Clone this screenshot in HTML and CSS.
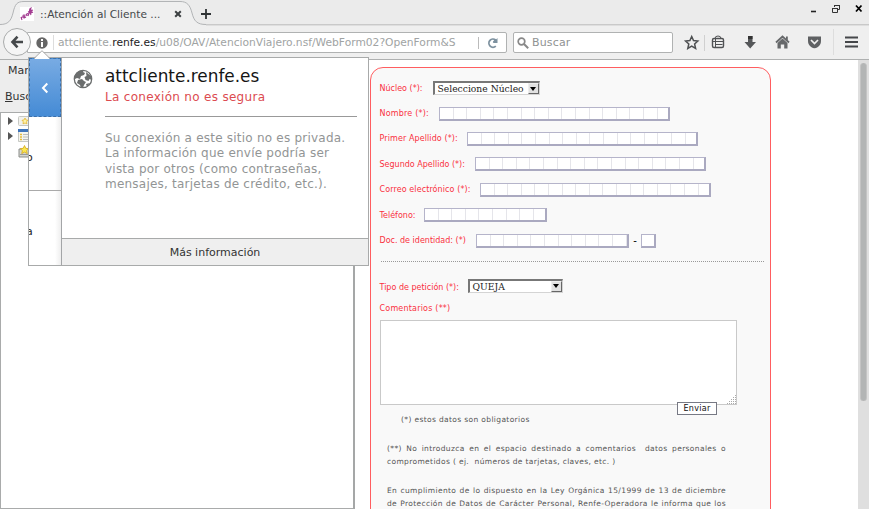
FILE: index.html
```html
<!DOCTYPE html>
<html lang="es">
<head>
<meta charset="utf-8">
<title>::Atención al Cliente</title>
<link rel="stylesheet" href="styles.css">
</head>
<body>
<div class="window">
  <header class="tabs">
    <svg class="tab-shape" width="206" height="26" viewBox="0 0 206 26"><path d="M0 24.500C8 24.500 11 21 13 13C15 4 17 1.500 24 1.500H180C187 1.500 190 5 192 13C194 21 197 24.500 206 24.500V26H0Z" fill="#efefef"/><path d="M0 24.500C8 24.500 11 21 13 13C15 4 17 1.500 24 1.500H180C187 1.500 190 5 192 13C194 21 197 24.500 206 24.500" fill="none" stroke="#b2b4b6"/></svg>
    <div class="tab">
      <svg class="favicon" width="14" height="14" viewBox="0 0 14 14"><path fill="#fff" d="M0 0h14v14H0z"/><path d="M1 10l1 3M1.500 10.500l2-1M4 10q2-2 0-2t0 3l2-1M6 7l1 2M6.500 7q1.500-1 2 1M8 9L11 1q-3 1 0 7M8 5l5-2M10 5q3-1 1-2t0 3l2-1" fill="none" stroke="#a33b91" stroke-width="1.100"/></svg>
      <span class="tab-title">::Atención al Cliente ...</span>
      <svg class="tab-x" width="8" height="8" viewBox="0 0 8 8"><path d="M1.200 1.200l5.600 5.600M6.800 1.200L1.200 6.800" stroke="#3c4042" stroke-width="2"/></svg>
      <svg class="plus" width="12" height="12" viewBox="0 0 12 12"><path d="M6 1v10M1 6h10" stroke="#303436" stroke-width="1.800"/></svg>
    </div>
    <svg class="controls" width="54" height="12" viewBox="0 0 54 12"><path d="M1 7.500h5" stroke="#222" stroke-width="1.600"/><path d="M24.500 3V1.500h5v4H28M22.500 4.500h5v4h-5zM24 1.500h6M22 4.500h6" stroke="#333" fill="none"/><path d="M46 1.500l5.500 6M51.500 1.500l-5.500 6" stroke="#000" stroke-width="1.800"/></svg>
  </header>
  <nav class="toolbar">
    <div class="back"><svg width="14" height="14" viewBox="0 0 14 14"><path d="M7.500 1.700L2.500 7l5 5.300M3 7h10" stroke="#45484a" stroke-width="2.600" fill="none"/></svg></div>
    <div class="urlbar">
      <svg class="info" width="12" height="12" viewBox="0 0 12 12"><circle cx="6" cy="6" r="5.700" fill="#666"/><path d="M6 2v2M6 5v5" stroke="#fff" stroke-width="2"/></svg>
      <span class="url">attcliente.<b>renfe.es</b>/u08/OAV/AtencionViajero.nsf/WebForm02?OpenForm&amp;S</span>
      <svg class="reload" width="12" height="12" viewBox="0 0 12 12"><path d="M8.800 9.200A4.100 4.100 0 1 1 8.600 3L6.500 5.200" fill="none" stroke="#7d919f" stroke-width="1.800"/><path d="M10.500 1v5H5.700z" fill="#7d919f"/></svg>
    </div>
    <div class="search"><svg width="12" height="12" viewBox="0 0 12 12"><circle cx="4.500" cy="4.500" r="3.300" fill="none" stroke="#888" stroke-width="1.700"/><path d="M7 7l4.200 4.200" stroke="#888" stroke-width="2"/></svg><span>Buscar</span></div>
    <div class="tools">
      <svg width="189" height="32" viewBox="0 0 189 32"><path d="M18.700 10.500l1.800 4.100 4.300.4-3.200 3 1 4.400-3.900-2.300-3.900 2.300 1-4.400-3.200-3 4.300-.4z" fill="none" stroke="#4e5052" stroke-width="1.500"/><path d="M31.500 9v16" stroke="#d0d0d0"/><rect x="39.500" y="12.500" width="11" height="9" rx="1.500" fill="none" stroke="#505254" stroke-width="1.400"/><path d="M42 12.500q0-2.500 3-2.500t3 2.500M40 15.500h10M42.500 18.500h7M42.500 13v8" fill="none" stroke="#505254"/><path d="M75 10h4.500v6H83l-5.800 6.500L71.500 16H75z" fill="#555759"/><path d="M75 10h4.500v3H75z" fill="#333"/><path d="M103 16.500l6.500-6 6.500 6" fill="none" stroke="#66686a" stroke-width="1.800"/><path d="M104.500 17l5-4.600 5 4.600v5.500h-3.300v-4h-3.400v4h-3.300zM113 10.500h1.800v4l-1.800-1.600z" fill="#66686a"/><path d="M135 10.500h13v4.500q0 4-3.500 6.300-3 2-6 0Q135 19 135 15z" fill="#5f6163"/><path d="M138 14l3.500 3.500L145 14" fill="none" stroke="#eee" stroke-width="1.700"/><path d="M160.500 3v26" stroke="#ddd"/><path d="M172 11.500h13M172 16h13M172 20.500h13" stroke="#45474a" stroke-width="2.200"/></svg>
    </div>
  </nav>
  <div class="main">
    <aside class="sidebar">
      <div class="side-title">Marcadores</div>
      <div class="side-search"><u>B</u>uscar:</div>
      <div class="tree">
        <div class="item"><i></i><svg width="14" height="12" viewBox="0 0 14 12"><rect x=".5" y="1.500" width="13" height="9" rx="1" fill="#f1f1ed" stroke="#c6c8c4"/><path d="M7 3l1 2 2 .3-1.500 1.500.4 2L7 8l-2 .8.300-2L4 5.300 6 5z" fill="#fff3a8" stroke="#e3b62f" stroke-width=".8"/></svg></div>
        <div class="item"><i></i><svg width="14" height="13" viewBox="0 0 14 13"><path d="M.5.500h13v12H.5z" fill="#f5f5ed" stroke="#c6c8c4"/><path d="M0 0h12v3H0z" fill="#3f74ba"/><path d="M2 5.500h2M2 8h2M2 10.500h2" stroke="#e8bc3a" stroke-width="1.500"/><path d="M5 5.500h6M5 8h6M5 10.500h6" stroke="#bbb"/></svg></div>
        <div class="item leaf"><svg width="14" height="13" viewBox="0 0 14 13"><path d="M1 4h12v8H1z" fill="#d4d6d2" stroke="#8b8d89"/><path d="M2 9.500h11" stroke="#999"/><path d="M6.500.500l1.300 2.800 3 .3-2.200 2 .7 3-2.800-1.500L3.700 8.600l.7-3-2.200-2 3-.3z" fill="#fce94f" stroke="#d4a81c" stroke-width=".8"/></svg></div>
      </div>
    </aside>
    <main class="page">
      <form class="panel">
        <div class="row core"><label>Núcleo (*):</label><div class="select"><span>Seleccione Núcleo</span><em></em></div></div>
        <div class="row name"><label>Nombre (*):</label><div class="cells"></div></div>
        <div class="row first"><label>Primer Apellido (*):</label><div class="cells"></div></div>
        <div class="row second"><label>Segundo Apellido (*):</label><div class="cells"></div></div>
        <div class="row mail"><label>Correo electrónico (*):</label><div class="cells"></div></div>
        <div class="row phone"><label>Teléfono:</label><div class="cells"></div></div>
        <div class="row doc"><label>Doc. de identidad: (*)</label><div class="cells"></div><span class="dash">-</span><div class="cells one"></div></div>
        <div class="rule"></div>
        <div class="row kind"><label>Tipo de petición (*):</label><div class="select"><span>QUEJA</span><em></em></div></div>
        <div class="comments">Comentarios (**)</div>
        <div class="textarea"><svg width="9" height="9" viewBox="0 0 9 9"><path d="M0 8.500h9M2 6.500h7M4 4.500h5M6 2.500h3M8 .5h1" stroke="#aaa" stroke-dasharray="1 1"/></svg></div>
        <div class="send">Enviar</div>
        <div class="mandatory">(*) estos datos son obligatorios</div>
        <div class="notes">
          <p class="full">(**) No introduzca en el espacio destinado a comentarios &nbsp;datos personales o</p>
          <p>comprometidos ( ej. &nbsp;números de tarjetas, claves, etc. )</p>
          <p class="full legal">En cumplimiento de lo dispuesto en la Ley Orgánica 15/1999 de 13 de diciembre</p>
          <p class="full">de Protección de Datos de Carácter Personal, Renfe-Operadora le informa que los</p>
        </div>
      </form>
    </main>
    <div class="scrollbar"><div class="thumb"></div></div>
  </div>
  <section class="popup">
    <svg class="arrow" width="16" height="9" viewBox="0 0 16 9"><path d="M0 9L8 .7 16 9z" fill="#fff"/><path d="M0 8.500L8 .7l8 7.800" fill="none" stroke="#aaa"/></svg>
    <div class="strip">
      <div class="chevron"><svg width="8" height="12" viewBox="0 0 8 12"><path d="M6.300 1.500L2 6l4.300 4.500" fill="none" stroke="#fff" stroke-width="2"/></svg></div>
      <div class="under"><span>o</span></div>
      <div class="under last"><span>a</span></div>
    </div>
    <div class="card">
      <div class="body">
        <svg class="globe" width="20" height="20" viewBox="0 0 20 20"><circle cx="10" cy="10" r="8.700" fill="#fff" stroke="#6b6e6e" stroke-width="1.300"/><path d="M2 6Q5 1 11 1l-1 2 2 1-1 2-3 1-1 3-3-1-2 1zM13 3l5 4 .5 4-2-1-1 2-3-1-1-3 2-1zM5 11l4-1 2 2 2 1-2 3-1 3H8l-1-3-3-2zM13 15l4-1-3 4z" fill="#6b6e6e"/></svg>
        <div class="info-text">
          <h1>attcliente.renfe.es</h1>
          <h2>La conexión no es segura</h2>
          <p>Su conexión a este sitio no es privada.<br>La información que envíe podría ser<br>vista por otros (como contraseñas,<br>mensajes, tarjetas de crédito, etc.).</p>
        </div>
      </div>
      <div class="more">Más información</div>
    </div>
  </section>
</div>
</body>
</html>
```
FILE: styles.css
```css
* { box-sizing: border-box; }
body { margin: 0; font-family: "DejaVu Sans", sans-serif; overflow: hidden; }
svg { display: block; flex: none; }
.window { position: relative; width: 869px; height: 509px; display: flex; flex-direction: column; overflow: hidden; background: #ededed; }
.tabs { position: relative; height: 26px; flex: none; display: flex; justify-content: space-between; background: linear-gradient(#ebebeb 24px, #c9c9c9 24px, #c9c9c9 25px, #dedede 25px); }
.tab-shape { position: absolute; left: 0; top: 0; }
.tab { position: relative; display: flex; align-items: center; height: 27px; padding-left: 20px; }
.tab-title { width: 140px; flex: none; padding-left: 6px; font-size: 10.600px; color: #45494b; white-space: nowrap; }
.plus { margin-left: 18px; }
.controls { margin: 4px 5px 0 0; }
.toolbar { height: 34px; flex: none; display: flex; align-items: flex-start; padding: 0 0 0 3px; background: #efefef; border-bottom: 1px solid #aeb0b0; }
.back { width: 28px; height: 28px; margin-top: 2px; border: 1px solid #a9abab; border-radius: 50%; background: #f5f5f5; display: flex; align-items: center; justify-content: center; position: relative; z-index: 1; }
.urlbar { width: 480px; height: 21px; margin: 6px 0 0 -4px; padding-left: 8px; background: #fff; border: 1px solid #b0b2b2; border-radius: 0 2px 2px 0; display: flex; align-items: center; }
.url { width: 405px; flex: none; height: 15px; margin-left: 5px; padding-left: 4px; border-left: 1px solid #ddd; font-size: 10.700px; line-height: 15px; color: #a0a3a3; white-space: nowrap; overflow: hidden; }
.url b { font-weight: 400; color: #222; }
.reload { box-sizing: content-box; margin-left: 20px; padding-left: 8px; border-left: 1px solid #bbb; }
.search { width: 160px; height: 21px; margin: 6px 0 0 6px; padding-left: 3px; border: 1px solid #b0b2b2; border-radius: 2px; background: #fff; display: flex; align-items: center; gap: 3px; font-size: 11px; letter-spacing: .15px; color: #8f9292; }
.tools { width: 189px; }
.main { display: flex; flex: 1; min-height: 0; }
.sidebar { width: 355px; border-right: 2px solid #a5a7a7; background: #ededed; display: flex; flex-direction: column; font-size: 11px; color: #333; }
.side-title { height: 22px; padding: 4px 0 0 8px; line-height: 14px; }
.side-search { height: 30px; padding: 8px 0 0 5px; line-height: 14px; }
.tree { flex: 1; background: #fff; border: 1px solid #a9abab; border-right: 0; }
.item { height: 15px; padding-left: 7px; display: flex; align-items: center; gap: 5px; }
.item i { border: 4px solid transparent; border-left: 5px solid #555; border-right: 0; }
.leaf { padding-left: 17px; height: 17px; }
.page { flex: 1; min-width: 0; background: #fff; padding: 7px 0 0 15px; }
.panel { width: 401px; height: 470px; border: 1px solid #ff5d60; border-radius: 13px; background: #f9f9f9; padding: 7.500px 0 0 8.500px; display: flex; flex-direction: column; }
.row { height: 25.4px; flex: none; display: flex; align-items: center; }
.row label { width: 59px; flex: none; font-size: 8px; color: #f9303e; white-space: nowrap; }
.core label { width: 53px; }
.name label { letter-spacing: .2px; }
.first label { width: 87px; letter-spacing: .1px; }
.second label { width: 95.500px; }
.mail label { width: 100.500px; letter-spacing: .1px; }
.phone label { width: 44.500px; }
.doc label { width: 96.500px; }
.kind label { width: 88px; padding-top: 3px; }
.select { width: 107px; height: 14px; border: 1px solid #d4d4d4; border-top: 2px solid #777; border-left: 2px solid #777; background: #fff; display: flex; align-items: center; justify-content: space-between; padding: 0 0 0 3px; font-family: "DejaVu Serif", serif; font-size: 9.2px; line-height: 11px; color: #222; white-space: nowrap; }
.kind .select { width: 95px; }
.select em { width: 11px; height: 11px; background: #e1e1e1; border: 1px solid #eee; border-right-color: #666; border-bottom-color: #666; display: flex; align-items: center; justify-content: center; }
.select em::after { content: ""; border: 3px solid transparent; border-top: 4px solid #000; border-bottom: 0; }
.cells { width: 231px; height: 14px; border: 1px solid #b5b4ca; border-bottom: 2px solid #aaa9c0; border-right: 2px solid #aaa9c0; background: repeating-linear-gradient(90deg, #fff 0 12.6px, #e5e5ea 12.6px 13.6px); }
.phone .cells { width: 123px; }
.doc .cells { width: 153px; }
.doc .one { width: 15px; }
.dash { width: 12px; text-align: center; font-size: 10px; line-height: 10px; }
.rule { width: 383px; height: 8.500px; flex: none; margin-left: 1px; border-bottom: 1px dotted #999; }
.kind { margin-top: 12px; height: 24px; }
.comments { height: 22px; flex: none; font-size: 8px; letter-spacing: .2px; line-height: 21px; color: #f9303e; }
.textarea { width: 357px; height: 85px; flex: none; border: 1px solid #c9c9c9; background: #fff; display: flex; align-items: flex-end; justify-content: flex-end; }
.send { position: relative; width: 40px; height: 13px; flex: none; margin: -3px 0 0 297.500px; border: 1px solid #777984; background: #fff; text-align: center; font-size: 8px; line-height: 11px; letter-spacing: .3px; color: #111; }
.mandatory { flex: none; height: 12px; margin: -1px 0 0 21.500px; font-size: 7.500px; line-height: 12px; letter-spacing: .36px; color: #555; }
.notes { width: 339px; margin: 16.500px 0 0 7.500px; font-size: 7.500px; line-height: 13px; letter-spacing: .36px; color: #555; }
.notes p { margin: 0; height: 13px; white-space: nowrap; }
.notes .full { text-align-last: justify; }
.notes .legal { margin-top: 15.500px; }
.scrollbar { width: 11px; background: #dfdfdf; padding: 3px 2px; }
.thumb { width: 7px; height: 338px; border-radius: 4px; background: #b3b5b5; border: 1px solid #c4c4c4; border-top: 0; border-bottom: 0; }
.popup { position: absolute; left: 28px; top: 57px; width: 341px; height: 209px; z-index: 3; border: 1px solid #a8aaaa; background: #fff; display: flex; }
.arrow { position: absolute; left: 5px; top: -8px; }
.strip { width: 33px; border-right: 1px solid #a3a5a7; display: flex; flex-direction: column; }
.chevron { height: 59px; flex: none; background: linear-gradient(#78abe3, #458bd5); border: 1px dashed #3a70ab; display: flex; align-items: center; justify-content: center; }
.under { height: 75px; border-bottom: 1px solid #aaa; padding-top: 34px; font-size: 11px; line-height: 14px; overflow: hidden; background: linear-gradient(90deg, #fff 26px, #eee); color: #222; }
.under span { margin-left: -3px; }
.last { border: 0; }
.card { flex: 1; display: flex; flex-direction: column; }
.body { flex: 1; display: flex; padding: 9px 11px 0 11px; }
.globe { margin-top: 2px; }
.info-text { margin-left: 12px; width: 252px; white-space: nowrap; }
h1 { margin: 0; font-size: 16.900px; line-height: 19px; font-weight: 400; color: #151515; }
h2 { margin: 0 0 11px; padding: 4px 0 11px; border-bottom: 1px solid #999; font-size: 12px; letter-spacing: .3px; line-height: 15px; font-weight: 400; color: #dc4b50; }
.info-text p { margin: 0; padding-top: 3px; font-size: 12px; letter-spacing: .22px; line-height: 15.300px; color: #929595; }
.more { height: 27px; background: #efefef; border-top: 1px solid #a8aaaa; text-align: center; font-size: 11px; line-height: 27px; color: #333; }
```
